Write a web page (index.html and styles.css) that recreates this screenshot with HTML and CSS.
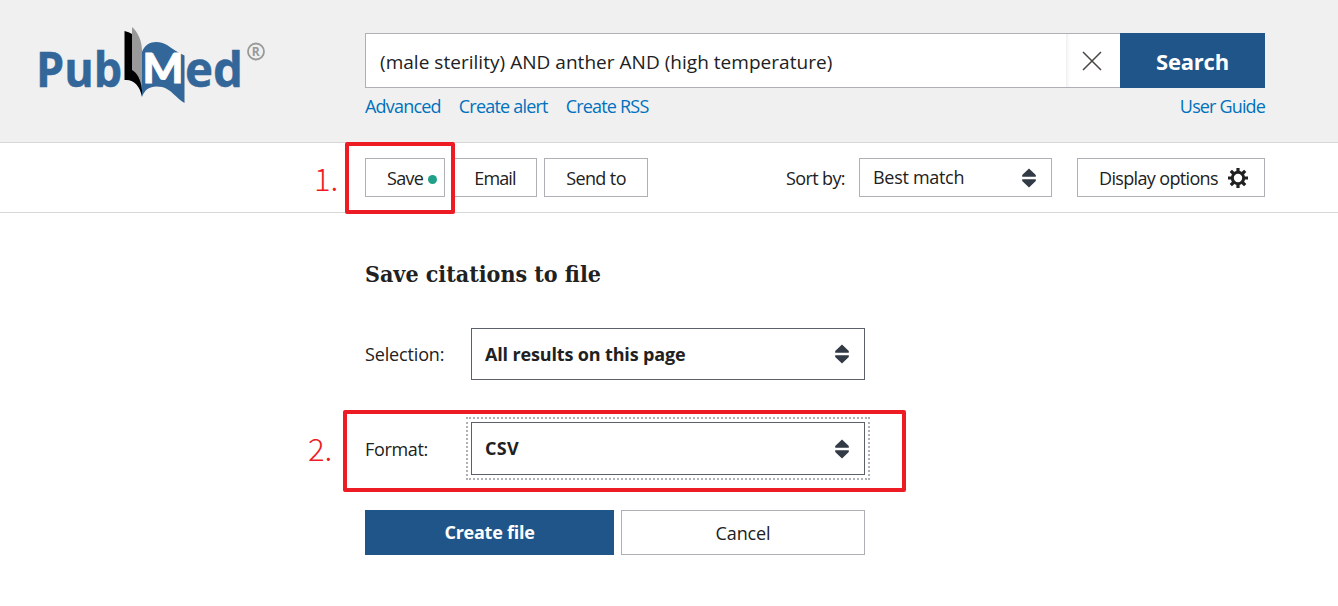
FILE: index.html
```html
<!DOCTYPE html>
<html lang="en">
<head>
<meta charset="utf-8">
<title>Save citations to file - PubMed</title>
<link rel="stylesheet" href="styles.css">
</head>
<body>
<header class="header">
  <a class="logo">
    <svg width="235" height="84" viewBox="34 24 235 84" role="img" aria-label="PubMed">
      <text class="logo-blue" x="36" y="87" textLength="86" lengthAdjust="spacingAndGlyphs">Pub</text>
      <path fill="#999" d="M132 27C138 32 142 41 142 51V90C140 80 135 73 128 71L132 70Z"/>
      <path fill="#000" d="M124.500 31Q129 32 132 34V70C137 73 141 79 142 90V97C140 86 134 79 124.500 80Z"/>
      <path fill="#369" d="M142 52C146 41 158 40 167 45C173 49 178 53 184.500 55.500V103C176 98 171 89 162 87C152 85 145 88 142 97Z"/>
      <text class="logo-m" x="142.500" y="83" textLength="41" lengthAdjust="spacingAndGlyphs">M</text>
      <text class="logo-blue" x="185" y="87" textLength="58" lengthAdjust="spacingAndGlyphs">ed</text>
      <circle cx="256" cy="51.500" r="8" fill="none" stroke="#999" stroke-width="1.800"/>
      <text class="logo-r" x="251.800" y="56">R</text>
    </svg>
  </a>
  <div class="search">
    <div class="search-row">
      <div class="search-input"><span>(male sterility) AND anther AND (high temperature)</span></div>
      <div class="clear"><svg width="20" height="20" viewBox="0 0 20 20"><path d="M1 1L19 19M19 1L1 19" stroke="#494440" stroke-width="1.500"/></svg></div>
      <div class="search-button">Search</div>
    </div>
    <nav class="links">
      <a class="advanced">Advanced</a><a>Create alert</a><a>Create RSS</a><a class="guide">User Guide</a>
    </nav>
  </div>
</header>
<section class="toolbar">
  <div class="button save"><span>Save</span><i class="dot"></i></div>
  <div class="button email">Email</div>
  <div class="button send">Send to</div>
  <span class="sort-label">Sort by:</span>
  <div class="sort-select"><span>Best match</span><svg class="arrows" width="14" height="20" viewBox="0 0 14 20"><path fill="#323a45" d="M7 .5L13.800 7V8.700H.2V7ZM.2 11.300H13.800V13L7 19.500L.2 13Z"/></svg></div>
  <div class="button display"><span>Display options</span>
    <svg width="20" height="20" viewBox="-10 -10 20 20"><circle r="5.700" fill="none" stroke="#212121" stroke-width="3"/><path stroke="#212121" stroke-width="3.200" d="M0-10V-6M0 10V6M-10 0H-6M10 0H6M-7.200-7.200L-4.500-4.500M7.200 7.200L4.500 4.500M-7.200 7.200L-4.500 4.500M7.200-7.200L4.500-4.500"/></svg>
  </div>
</section>
<main class="panel">
  <h1>Save citations to file</h1>
  <div class="field selection"><label>Selection:</label><div class="select"><span>All results on this page</span><svg class="arrows" width="14" height="20" viewBox="0 0 14 20"><path fill="#323a45" d="M7 .5L13.800 7V8.700H.2V7ZM.2 11.300H13.800V13L7 19.500L.2 13Z"/></svg></div></div>
  <div class="field format"><label>Format:</label><div class="select focused"><span>CSV</span><svg class="arrows" width="14" height="20" viewBox="0 0 14 20"><path fill="#323a45" d="M7 .5L13.800 7V8.700H.2V7ZM.2 11.300H13.800V13L7 19.500L.2 13Z"/></svg></div></div>
  <div class="actions"><div class="create">Create file</div><div class="cancel">Cancel</div></div>
</main>
<div class="mark mark-one"></div><div class="step step-one">1.</div>
<div class="mark mark-two"></div><div class="step step-two">2.</div>
</body>
</html>
```

FILE: styles.css
```css
* { box-sizing: border-box; }
body { margin: 0; position: relative; height: 606px; overflow: hidden; background: #fff; color: #212121; font: 18px/24px "Open Sans", "Noto Sans", sans-serif; letter-spacing: -.5px; white-space: nowrap; }
svg { display: block; flex: none; }
.header { height: 143px; display: flex; background: #f0f0f0; border-bottom: 1px solid #d6d7d9; padding: 24px 73px 0 34px; }
.logo { width: 331px; letter-spacing: 0; }
.logo-blue { font-size: 48px; font-weight: 700; fill: #369; stroke: #369; stroke-width: .5px; }
.logo-m { font-family: Lato, sans-serif; font-size: 41px; font-weight: 900; fill: #fff; stroke: #fff; stroke-width: .8px; }
.logo-r { font-size: 12px; font-weight: 700; fill: #999; }
.search { width: 900px; padding-top: 9px; }
.search-row { display: flex; height: 55px; }
.search-input { flex: 1; background: #fff; border: 1px solid #aeb0b5; border-right: 0; padding: 16px 14px; font-size: 19px; letter-spacing: .03px; }
.clear { width: 54px; background: #fff; border: solid #aeb0b5; border-width: 1px 0; padding: 17px 0 0 15.5px; box-shadow: inset 5px 0 5px -5px #ddd; }
.search-button { width: 145px; background: #205589; color: #fff; font-weight: 700; font-size: 22px; line-height: 57px; text-align: center; letter-spacing: -.2px; }
.links { display: flex; gap: 18px; padding-top: 6px; color: #0071bc; letter-spacing: -.8px; }
.guide { margin-left: auto; letter-spacing: -.85px; }
.toolbar { height: 70px; display: flex; padding: 15px 73px 0 365px; border-bottom: 1px solid #d6d7d9; }
.button, .sort-select { height: 39px; border: 1px solid #aeb0b5; background: #fff; line-height: 39px; text-align: center; }
.save { width: 80px; display: flex; align-items: center; padding-left: 21px; letter-spacing: -.7px; }
.save span { padding-top: 2px; }
.dot { width: 9px; height: 9px; border-radius: 50%; background: #20a088; margin-left: 5px; margin-top: 3px; }
.email { width: 84px; margin-left: 8px; letter-spacing: -.9px; }
.send { width: 104px; margin-left: 7px; letter-spacing: -.6px; }
.sort-label { margin-left: auto; line-height: 40px; letter-spacing: -.6px; }
.sort-select { width: 193px; margin-left: 14px; display: flex; justify-content: space-between; padding: 0 15.5px 0 13px; line-height: 36px; letter-spacing: -.3px; }
.sort-select .arrows { margin-top: 9px; }
.display { width: 188px; margin-left: 25px; display: flex; justify-content: space-between; padding: 0 16px 0 21px; letter-spacing: -.65px; }
.display svg { margin-top: 9px; }
.panel { padding: 45px 0 0 365px; width: 865px; letter-spacing: -.15px; }
h1 { margin: 0; font: 700 23px/32px "DejaVu Serif Condensed", "DejaVu Serif", serif; letter-spacing: 0; }
.field { display: flex; align-items: center; }
.selection { margin-top: 38px; }
.format { margin-top: 42px; }
.format label { letter-spacing: -.35px; }
label { width: 106px; }
.select { width: 394px; height: 52px; border: 1px solid #5b616b; display: flex; align-items: center; justify-content: space-between; padding: 0 15.5px 0 13px; font-weight: 700; }
.focused { height: 53px; outline: 2px dotted #aeb0b5; outline-offset: 3px; letter-spacing: .3px; }
.focused span { padding-bottom: 1px; }
.actions { display: flex; gap: 7px; margin-top: 35px; line-height: 45px; text-align: center; }
.create { width: 249px; height: 45px; background: #205589; color: #fff; font-weight: 700; letter-spacing: -.25px; }
.cancel { width: 244px; height: 45px; border: 1px solid #aeb0b5; }
.mark { position: absolute; border: 4px solid #ed1c24; border-radius: 2px; }
.mark-one { left: 345px; top: 142px; width: 110px; height: 72px; }
.mark-two { left: 343px; top: 410px; width: 563px; height: 82px; }
.step { position: absolute; color: #ed1c24; font: 300 31px/36px "Noto Sans CJK SC", sans-serif; letter-spacing: 0; }
.step-one { left: 314px; top: 160px; }
.step-two { left: 308px; top: 430px; }
```
